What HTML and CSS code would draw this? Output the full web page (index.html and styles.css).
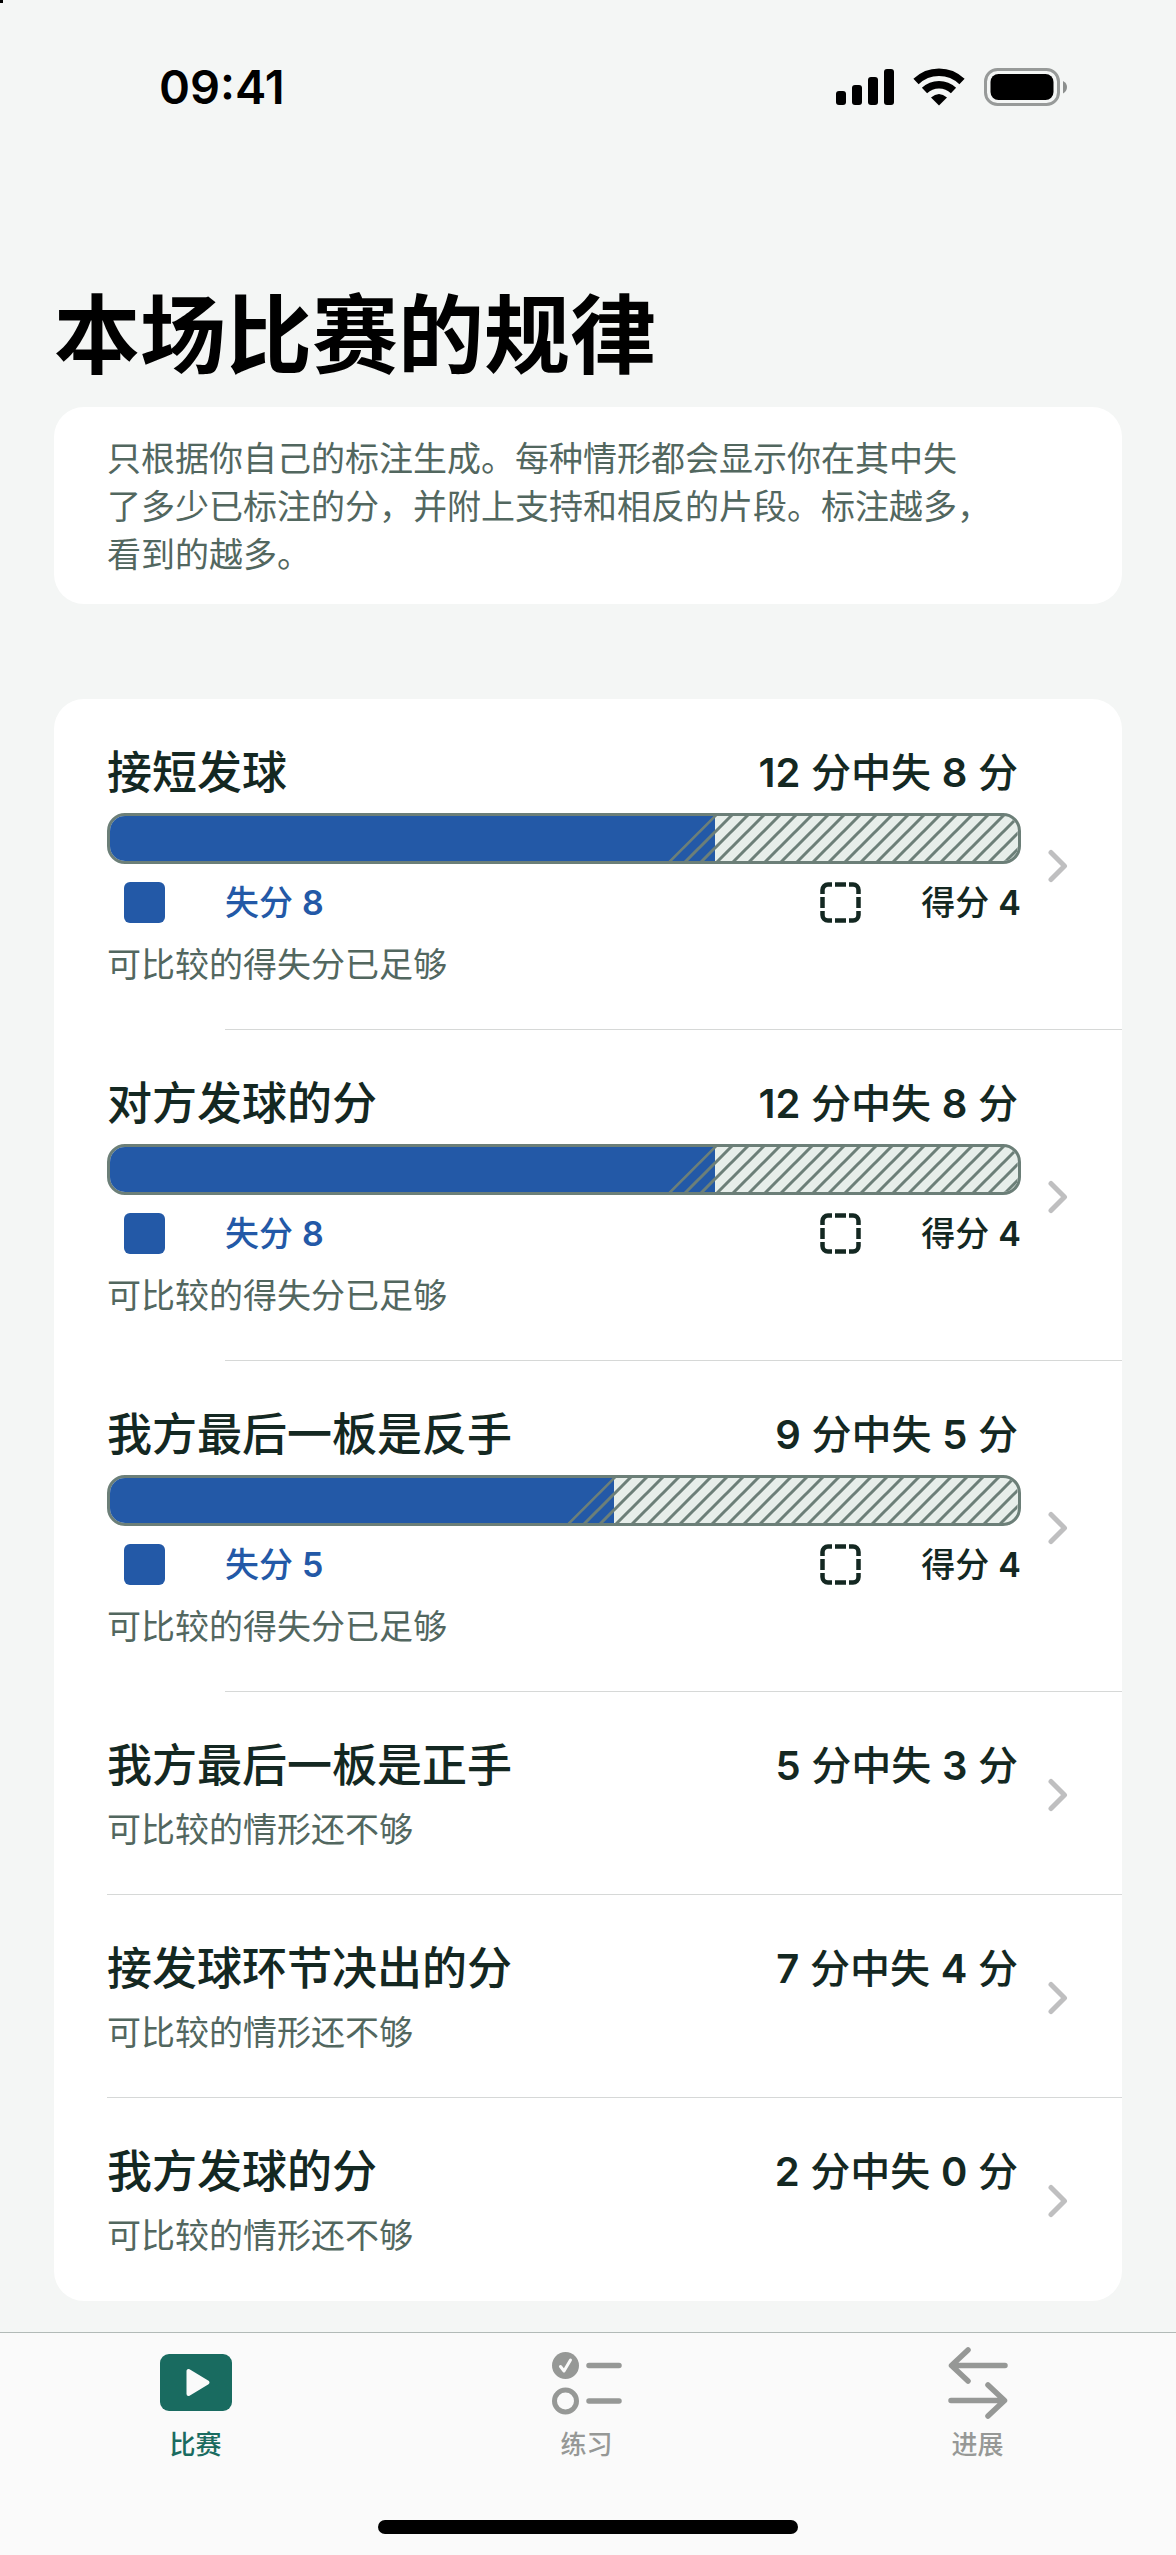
FILE: index.html
```html
<!doctype html>
<html lang="zh-CN">
  <head>
    <meta charset="utf-8">
    <meta name="viewport" content="width=device-width, initial-scale=1">
    <title>本场比赛的规律</title>
    <link rel="stylesheet" href="styles.css">
  </head>

  <body>

	<!-- shared shapes -->
	<svg class="defs" width="0" height="0" aria-hidden="true">
		<defs>
			<pattern id="hatch" width="16" height="16" patternUnits="userSpaceOnUse">
				<path d="M-4 4L4 -4M-2 18L18 -2M12 20L20 12" stroke="#6c7f78" stroke-width="3" fill="none"/>
			</pattern>
			<symbol id="chevron" viewBox="0 0 20 34">
				<path d="M3 3.500L16.500 17L3 30.500" fill="none" stroke="#bfbfc0" stroke-width="5" stroke-linecap="round" stroke-linejoin="round"/>
			</symbol>
			<symbol id="dashed" viewBox="0 0 41 41">
				<path d="M2.500 12V8A5.500 5.500 0 0 1 8 2.500H12M15 2.500H26M29 2.500H33A5.500 5.500 0 0 1 38.500 8V12M38.500 15V26M38.500 29V33A5.500 5.500 0 0 1 33 38.500H29M26 38.500H15M12 38.500H8A5.500 5.500 0 0 1 2.500 33V29M2.500 26V15" fill="none" stroke="#142822" stroke-width="4.500"/>
			</symbol>
		</defs>
	</svg>

	<header class="status">
		<span class="time">09:41</span>
		<div class="status-icons">
			<svg width="58" height="38" viewBox="0 0 58 38" aria-hidden="true">
				<rect x="0" y="23" width="10" height="14" rx="3"/>
				<rect x="16" y="17" width="10" height="20" rx="3"/>
				<rect x="32" y="9" width="10" height="28" rx="3"/>
				<rect x="48" y="1" width="10" height="36" rx="3"/>
			</svg>
			<svg width="52" height="38" viewBox="0 0 52 38" aria-hidden="true">
				<path d="M3 13.500A33 33 0 0 1 49 13.500" fill="none" stroke="#000" stroke-width="7.500"/>
				<path d="M11.500 22.500A21 21 0 0 1 40.500 22.500" fill="none" stroke="#000" stroke-width="7.500"/>
				<path d="M26 37.500L18 29.500Q26 22.500 34 29.500Z"/>
			</svg>
			<svg width="84" height="38" viewBox="0 0 84 38" aria-hidden="true">
				<rect x="1.500" y="1.500" width="73" height="35" rx="12" fill="none" stroke="#979a99" stroke-width="3"/>
				<rect x="6.500" y="6" width="63" height="26" rx="8"/>
				<path d="M79 13Q83 15 83 19T79 25.500Z" fill="#8c8f8e"/>
			</svg>
		</div>
	</header>

	<main class="page">
		<h1>本场比赛的规律</h1>

		<p class="card note">只根据你自己的标注生成。每种情形都会显示你在其中失<br>了多少已标注的分，并附上支持和相反的片段。标注越多，<br>看到的越多。</p>

		<ul class="card list">
			<li class="full">
				<a class="row" href="#serve-short">
					<div class="info">
						<div class="head"><span class="name">接短发球</span><span class="count"><b>12</b> 分中失 <b>8</b> 分</span></div>
						<div class="bar">
							<div class="lost" style="width:66.67%"></div>
							<svg class="won" aria-hidden="true"><rect width="100%" height="100%" fill="url(#hatch)"/></svg>
						</div>
						<div class="legend">
							<span class="key key-lost"><i class="square"></i><span>失分 <b>8</b></span></span>
							<span class="key"><svg width="41" height="41" aria-hidden="true"><use href="#dashed"/></svg><span>得分 <b>4</b></span></span>
						</div>
						<div class="sub">可比较的得失分已足够</div>
					</div>
					<svg class="chevron" width="20" height="34" aria-hidden="true"><use href="#chevron"/></svg>
				</a>
			</li>
			<li class="full">
				<a class="row" href="#their-serve">
					<div class="info">
						<div class="head"><span class="name">对方发球的分</span><span class="count"><b>12</b> 分中失 <b>8</b> 分</span></div>
						<div class="bar">
							<div class="lost" style="width:66.67%"></div>
							<svg class="won" aria-hidden="true"><rect width="100%" height="100%" fill="url(#hatch)"/></svg>
						</div>
						<div class="legend">
							<span class="key key-lost"><i class="square"></i><span>失分 <b>8</b></span></span>
							<span class="key"><svg width="41" height="41" aria-hidden="true"><use href="#dashed"/></svg><span>得分 <b>4</b></span></span>
						</div>
						<div class="sub">可比较的得失分已足够</div>
					</div>
					<svg class="chevron" width="20" height="34" aria-hidden="true"><use href="#chevron"/></svg>
				</a>
			</li>
			<li class="full">
				<a class="row" href="#last-backhand">
					<div class="info">
						<div class="head"><span class="name">我方最后一板是反手</span><span class="count"><b>9</b> 分中失 <b>5</b> 分</span></div>
						<div class="bar">
							<div class="lost" style="width:55.56%"></div>
							<svg class="won" aria-hidden="true"><rect width="100%" height="100%" fill="url(#hatch)"/></svg>
						</div>
						<div class="legend">
							<span class="key key-lost"><i class="square"></i><span>失分 <b>5</b></span></span>
							<span class="key"><svg width="41" height="41" aria-hidden="true"><use href="#dashed"/></svg><span>得分 <b>4</b></span></span>
						</div>
						<div class="sub">可比较的得失分已足够</div>
					</div>
					<svg class="chevron" width="20" height="34" aria-hidden="true"><use href="#chevron"/></svg>
				</a>
			</li>
			<li>
				<a class="row" href="#last-forehand">
					<div class="info">
						<div class="head"><span class="name">我方最后一板是正手</span><span class="count"><b>5</b> 分中失 <b>3</b> 分</span></div>
						<div class="sub">可比较的情形还不够</div>
					</div>
					<svg class="chevron" width="20" height="34" aria-hidden="true"><use href="#chevron"/></svg>
				</a>
			</li>
			<li>
				<a class="row" href="#serve-receive">
					<div class="info">
						<div class="head"><span class="name">接发球环节决出的分</span><span class="count"><b>7</b> 分中失 <b>4</b> 分</span></div>
						<div class="sub">可比较的情形还不够</div>
					</div>
					<svg class="chevron" width="20" height="34" aria-hidden="true"><use href="#chevron"/></svg>
				</a>
			</li>
			<li>
				<a class="row" href="#our-serve">
					<div class="info">
						<div class="head"><span class="name">我方发球的分</span><span class="count"><b>2</b> 分中失 <b>0</b> 分</span></div>
						<div class="sub">可比较的情形还不够</div>
					</div>
					<svg class="chevron" width="20" height="34" aria-hidden="true"><use href="#chevron"/></svg>
				</a>
			</li>
		</ul>
	</main>

	<footer class="bottom">
		<nav class="tabs">
			<a class="tab active" href="#match">
				<svg width="72" height="72" viewBox="0 0 72 72" aria-hidden="true">
					<rect x="0" y="7" width="72" height="57" rx="9" fill="#196b60"/>
					<path d="M28.500 24V47L47.500 35.500Z" fill="#fafafa" stroke="#fafafa" stroke-width="4" stroke-linejoin="round"/>
				</svg>
				比赛
			</a>
			<a class="tab" href="#practice">
				<svg width="72" height="72" viewBox="0 0 72 72" fill="none" stroke="#969896" stroke-linecap="round" stroke-linejoin="round" aria-hidden="true">
					<circle cx="14.500" cy="18.500" r="13.500" fill="#969896" stroke="none"/>
					<path d="M9.500 19.500L13 24L19.500 13" stroke="#fafafa" stroke-width="3"/>
					<circle cx="14.500" cy="54" r="11" stroke-width="5"/>
					<path d="M38 18.500H68M38 54H68" stroke-width="5.500"/>
				</svg>
				练习
			</a>
			<a class="tab" href="#progress">
				<svg width="72" height="72" viewBox="0 0 72 72" fill="none" stroke="#969896" stroke-width="5.500" stroke-linecap="round" stroke-linejoin="round" aria-hidden="true">
					<path d="M63 18.500H10M26 3L9.500 18.500L26 34"/>
					<path d="M9 53.500H62M46 38L62.500 53.500L46 69"/>
				</svg>
				进展
			</a>
		</nav>
		<div class="home"></div>
	</footer>

  </body>
</html>
```
FILE: styles.css
```css
* {
	box-sizing: border-box;
}

body {
	margin: 0;
	min-height: 100vh;
	display: flex;
	flex-direction: column;
	background: #f4f6f5;
	color: #142822;
	font-family: Inter, "Noto Sans CJK SC", sans-serif;
}

/* screen corner */
body::before {
	content: "";
	position: absolute;
	top: 0;
	left: 0;
	width: 3px;
	height: 3px;
	background: #000;
}

a {
	color: inherit;
	text-decoration: none;
}

b {
	font-weight: 600;
}

svg {
	display: block;
	flex-shrink: 0;
}

.defs {
	position: absolute;
}

/* status bar */
.status {
	display: flex;
	justify-content: space-between;
	align-items: center;
	padding: 57px 108px 0 159px;
	color: #000;
}

.time {
	font-size: 47px;
	line-height: 60px;
	font-weight: 600;
}

.status-icons {
	display: flex;
	gap: 19px;
}

.page {
	flex: 1;
	padding: 167px 54px 30px;
}

h1 {
	margin: 0 0 19px;
	font-size: 86px;
	line-height: 104px;
	font-weight: 700;
	color: #000;
}

.card {
	margin: 0;
	background: #fff;
	border-radius: 30px;
}

.note {
	margin-bottom: 95px;
	padding: 28px 53px 25px;
	font-size: 34px;
	line-height: 48px;
	color: #52675f;
}

.list {
	padding: 0;
	list-style: none;
	overflow: hidden;
}

/* separators, inset to the text they follow */
.list li::after {
	content: "";
	display: block;
	height: 1px;
	margin-left: 53px;
	background: #d6d8d7;
}

.list li.full::after {
	margin-left: 171px;
}

.list li:last-child::after {
	background: none;
}

.row {
	display: flex;
	align-items: center;
	gap: 27px;
	padding: 43px 54px 40px 53px;
}

.info {
	flex: 1;
}

.head {
	display: flex;
	justify-content: space-between;
	align-items: center;
	padding-right: 3px;
	line-height: 62px;
}

.name {
	font-size: 45px;
	font-weight: 500;
}

.count {
	font-size: 40px;
	font-weight: 500;
}

.bar {
	display: flex;
	height: 51px;
	margin-top: 9px;
	margin-bottom: 18px;
	border: 3px solid #6c7f78;
	border-radius: 18px;
	background: #e7eeea;
	overflow: hidden;
}

.lost {
	background: #2359a7;
}

/* stripes start one bar height before the end of the blue part */
.won {
	flex: 1;
	min-width: 0;
	height: 45px;
	margin-left: -48px;
	clip-path: polygon(46px 0, 100% 0, 100% 100%, 1px 100%);
}

.legend {
	display: flex;
	justify-content: space-between;
	padding-left: 17px;
}

.key {
	display: flex;
	align-items: center;
	gap: 60px;
	height: 41px;
	font-size: 34px;
	line-height: 41px;
	font-weight: 500;
}

.key-lost {
	color: #2359a7;
}

.square {
	width: 41px;
	height: 41px;
	border-radius: 6px;
	background: #2359a7;
}

.sub {
	margin-top: 9px;
	font-size: 34px;
	line-height: 48px;
	color: #52675f;
}

.full .sub {
	margin-top: 18px;
}

/* tab bar */
.bottom {
	position: sticky;
	bottom: 0;
	padding-bottom: 21px;
	background: #fafafa;
	border-top: 1px solid #b2bab7;
}

.tabs {
	display: flex;
	padding: 14px 3px 57px 0;
}

.tab {
	flex: 1;
	display: flex;
	flex-direction: column;
	align-items: center;
	gap: 8px;
	font-size: 26px;
	line-height: 36px;
	font-weight: 500;
	color: #969896;
}

.active {
	color: #196b60;
}

.home {
	width: 420px;
	height: 14px;
	margin: 0 auto;
	border-radius: 7px;
	background: #000;
}
```
